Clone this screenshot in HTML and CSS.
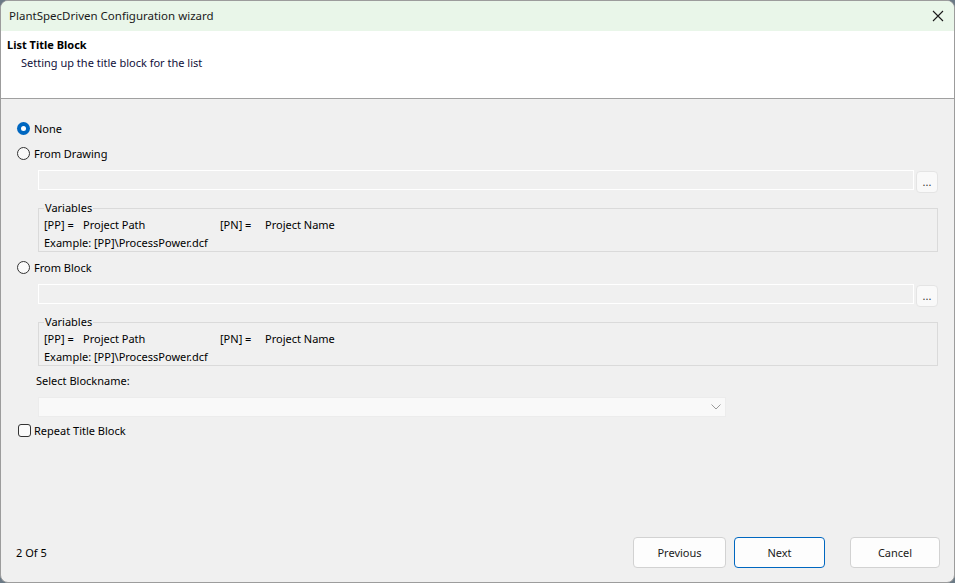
FILE: index.html
```html
<!DOCTYPE html>
<html>
<head>
<meta charset="utf-8">
<link rel="stylesheet" href="styles.css">
</head>
<body>
<div class="window">
  <div class="titlebar">
    <span class="title">PlantSpecDriven Configuration wizard</span>
    <svg class="close" width="12" height="12" viewBox="0 0 12 12"><path d="M1 1 L11 11 M11 1 L1 11" stroke="#1a1a1a" stroke-width="1.1" fill="none"/></svg>
  </div>
  <div class="header">
    <div class="h-title">List Title Block</div>
    <div class="h-sub">Setting up the title block for the list</div>
  </div>
  <div class="content">
    <div class="opt first"><span class="radio checked"></span><span>None</span></div>
    <div class="opt"><span class="radio"></span><span>From Drawing</span></div>
    <div class="pathrow">
      <div class="field"></div>
      <div class="browse">...</div>
    </div>
    <fieldset class="group">
      <legend>Variables</legend>
      <div class="vars">
        <span>[PP] =</span><span>Project Path</span><span>[PN] =</span><span>Project Name</span>
      </div>
      <div class="example">Example: [PP]\ProcessPower.dcf</div>
    </fieldset>
    <div class="opt second"><span class="radio"></span><span>From Block</span></div>
    <div class="pathrow">
      <div class="field"></div>
      <div class="browse">...</div>
    </div>
    <fieldset class="group">
      <legend>Variables</legend>
      <div class="vars">
        <span>[PP] =</span><span>Project Path</span><span>[PN] =</span><span>Project Name</span>
      </div>
      <div class="example">Example: [PP]\ProcessPower.dcf</div>
    </fieldset>
    <div class="label">Select Blockname:</div>
    <div class="combo">
      <svg width="10" height="6" viewBox="0 0 10 6"><path d="M0.5 0.5 L5 5 L9.5 0.5" stroke="#9a9a9a" stroke-width="1" fill="none"/></svg>
    </div>
    <div class="opt check"><span class="checkbox"></span><span>Repeat Title Block</span></div>
    <div class="footer">
      <span class="step">2 Of 5</span>
      <div class="buttons">
        <button class="btn prev">Previous</button>
        <button class="btn next">Next</button>
        <button class="btn cancel">Cancel</button>
      </div>
    </div>
  </div>
</div>
</body>
</html>
```
FILE: styles.css
```css
html, body {
  margin: 0;
  padding: 0;
  background: #6b7a86;
}
body {
  font-family: "Noto Sans", "Open Sans", sans-serif;
  font-size: 11px;
  color: #000;
}
.window {
  width: 955px;
  height: 583px;
  box-sizing: border-box;
  border: 1px solid #9c9c9c;
  border-radius: 8px;
  overflow: hidden;
  display: flex;
  flex-direction: column;
  background: #f0f0f0;
}
.titlebar {
  height: 30px;
  flex: none;
  box-sizing: border-box;
  background: #e9f6e9;
  display: flex;
  align-items: center;
  justify-content: space-between;
  padding: 0 10px 1px 8px;
}
.title {
  font-size: 11.5px;
  color: #1a1a1a;
}
.close {
  display: block;
}
.header {
  flex: none;
  background: #fff;
  border-bottom: 1px solid #a0a0a0;
  box-sizing: border-box;
  height: 68px;
}
.h-title {
  font-weight: bold;
  margin: 6px 0 0 6px;
  line-height: 16px;
}
.h-sub {
  margin: 2px 0 0 20px;
  line-height: 16px;
  color: #10103a;
}
.content {
  flex: 1;
  display: flex;
  flex-direction: column;
  padding: 21px 14px 14px 16px;
}
.opt {
  display: flex;
  align-items: center;
  height: 16px;
  gap: 4px;
  margin-top: 9px;
}
.opt.first {
  margin-top: 0;
}
.opt.second {
  margin-top: 7px;
}
.radio {
  width: 13px;
  height: 13px;
  box-sizing: border-box;
  border: 1px solid #333;
  border-radius: 50%;
  background: #fafafa;
  display: flex;
  align-items: center;
  justify-content: center;
}
.radio.checked {
  border: none;
  background: #0067c0;
}
.radio.checked::after {
  content: "";
  width: 5px;
  height: 5px;
  border-radius: 50%;
  background: #fff;
}
.pathrow {
  display: flex;
  align-items: flex-start;
  margin: 9px 0 0 21px;
  height: 23px;
}
.field {
  width: 876px;
  height: 20px;
  box-sizing: border-box;
  border: 1px solid #fff;
  background: #f0f0f0;
}
.browse {
  margin: 1px 0 0 2px;
  width: 22px;
  height: 22px;
  box-sizing: border-box;
  border: 1px solid #e4e4e4;
  border-radius: 4px;
  background: #f9f9f9;
  font-size: 11px;
  line-height: 20px;
  text-align: center;
  color: #3a3a3a;
}
.group {
  margin: 8px 0 0 21px;
  padding: 0 0 0 5px;
  width: 900px;
  box-sizing: border-box;
  border: 1px solid #dadada;
  min-width: 0;
}
.group legend {
  padding: 0 1px;
  line-height: 14px;
}
.vars {
  display: grid;
  grid-template-columns: 39px 137px 45px auto;
  line-height: 16px;
  margin-top: 2px;
}
.example {
  line-height: 16px;
  margin-top: 2px;
}
.label {
  margin: 7px 0 0 19px;
  line-height: 16px;
}
.combo {
  margin: 8px 0 0 21px;
  width: 688px;
  height: 20px;
  box-sizing: border-box;
  background: #f9f9f9;
  border: 1px solid #ececec;
  display: flex;
  align-items: center;
  justify-content: flex-end;
  padding-right: 4px;
}
.combo svg {
  display: block;
}
.opt.check {
  margin-top: 5px;
  margin-left: 1px;
  gap: 3px;
}
.checkbox {
  width: 13px;
  height: 13px;
  box-sizing: border-box;
  border: 1px solid #333;
  border-radius: 3px;
  background: #fafafa;
}
.footer {
  margin-top: auto;
  display: flex;
  align-items: center;
  justify-content: space-between;
}
.step {
  margin-left: -1px;
}
.buttons {
  display: flex;
  align-items: center;
}
.btn {
  font-family: inherit;
  font-size: 11px;
  height: 31px;
  box-sizing: border-box;
  background: #fdfdfd;
  border: 1px solid #d2d2d2;
  border-radius: 4px;
  color: #1a1a1a;
  padding: 0;
}
.prev { width: 93px; }
.next {
  width: 91px;
  margin-left: 8px;
  border-color: #0067c0;
}
.cancel {
  width: 90px;
  margin-left: 25px;
}
```
